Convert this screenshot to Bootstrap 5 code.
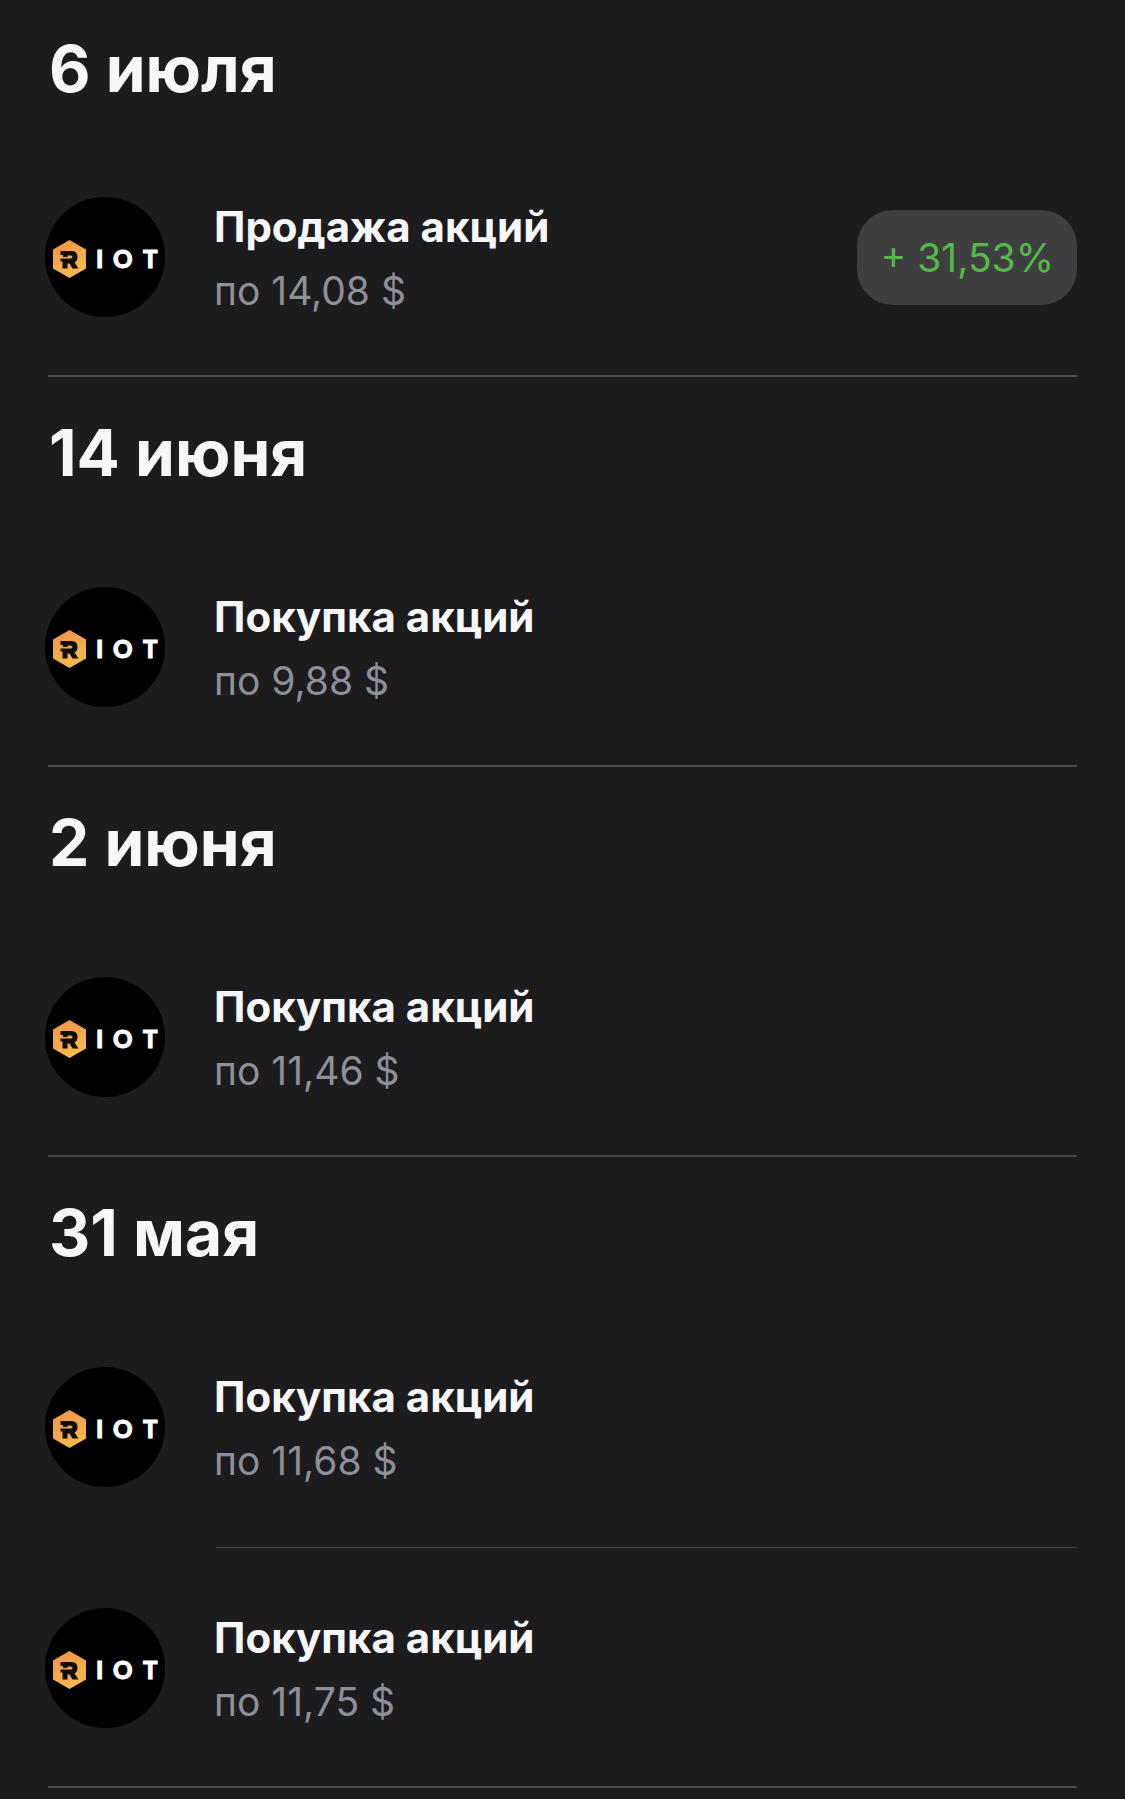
<!DOCTYPE html>
<html lang="ru" data-bs-theme="dark">
<head>
<meta charset="utf-8">
<meta name="viewport" content="width=device-width, initial-scale=1">
<title>История сделок</title>
<link href="https://cdn.jsdelivr.net/npm/bootstrap@5.3.0/dist/css/bootstrap.min.css" rel="stylesheet">
<style>
body { background: #1c1c1e; color: #f7f7f9; font-family: Inter, "Noto Sans", sans-serif; }
.history { padding: 0 48px 0 45px; }
.day-title { color: #f7f7f9; font-size: 64px; line-height: 78px; font-weight: 700; padding: 37px 0 35px 4px; }
.day:first-child .day-title { padding: 30px 0 29px 4px; }
.deal { padding: 54px 0 52px; gap: 49px; }
.deal-logo { width: 120px; height: 120px; }
.deal-name { font-size: 42px; line-height: 64px; font-weight: 700; }
.deal-price { font-size: 39px; line-height: 64px; color: #8f9097; }
.deal-profit { background: #3f3f41; color: #55b949; font-size: 39px; line-height: 47px; padding: 24px 23px; border-radius: 36px; }
.day-line { height: 2px; margin-left: 3px; background: #4a4a4c; }
.deal-line { height: 1px; margin: 2px 0 0 171px; background: #434345; }
.logo-word { font-family: Lato, sans-serif; font-weight: 900; font-size: 24px; fill: #fff; stroke: #fff; stroke-width: 1px; }
</style>
<script src="https://cdn.jsdelivr.net/npm/bootstrap@5.3.0/dist/js/bootstrap.bundle.min.js" defer></script>
</head>
<body>
<svg width="0" height="0" class="position-absolute" aria-hidden="true">
  <defs>
    <linearGradient id="amber" x1="0" y1="0" x2=".4" y2="1"><stop offset="0" stop-color="#f0914a"/><stop offset="1" stop-color="#f5b94f"/></linearGradient>
    <symbol id="riot" viewBox="0 0 120 120">
      <circle cx="60" cy="60" r="60" fill="#000"/>
      <path d="M24.500 43L41 52.500V71.500L24.500 81L8 71.500V52.500Z" fill="url(#amber)"/>
      <path d="M15.500 54H26.500Q32.500 54 32.500 60Q32.500 64 29.500 65.500L33.500 71.500H27.500L24.500 66.500H22.500V71.500H17.500V64.500H15.500V61.500H25.500Q27.500 61.500 27.500 60Q27.500 58.500 25.500 58.500H22.500V60H18V58H15.500Z" fill="#100c08"/>
    </symbol>
  </defs>
</svg>
<main class="history">
  <section class="day">
    <h2 class="day-title m-0">6 июля</h2>
    <article class="deal d-flex align-items-center">
      <svg class="deal-logo flex-shrink-0" viewBox="0 0 120 120"><use href="#riot"/><text class="logo-word" x="51 68 98" y="71">IOT</text></svg>
      <div class="flex-grow-1 pt-1"><div class="deal-name">Продажа акций</div><div class="deal-price">по 14,08 $</div></div>
      <span class="deal-profit text-nowrap">+ 31,53%</span>
    </article>
    <div class="day-line"></div>
  </section>
  <section class="day">
    <h2 class="day-title m-0">14 июня</h2>
    <article class="deal d-flex align-items-center">
      <svg class="deal-logo flex-shrink-0" viewBox="0 0 120 120"><use href="#riot"/><text class="logo-word" x="51 68 98" y="71">IOT</text></svg>
      <div class="flex-grow-1 pt-1"><div class="deal-name">Покупка акций</div><div class="deal-price">по 9,88 $</div></div>
    </article>
    <div class="day-line"></div>
  </section>
  <section class="day">
    <h2 class="day-title m-0">2 июня</h2>
    <article class="deal d-flex align-items-center">
      <svg class="deal-logo flex-shrink-0" viewBox="0 0 120 120"><use href="#riot"/><text class="logo-word" x="51 68 98" y="71">IOT</text></svg>
      <div class="flex-grow-1 pt-1"><div class="deal-name">Покупка акций</div><div class="deal-price">по 11,46 $</div></div>
    </article>
    <div class="day-line"></div>
  </section>
  <section class="day">
    <h2 class="day-title m-0">31 мая</h2>
    <article class="deal d-flex align-items-center">
      <svg class="deal-logo flex-shrink-0" viewBox="0 0 120 120"><use href="#riot"/><text class="logo-word" x="51 68 98" y="71">IOT</text></svg>
      <div class="flex-grow-1 pt-1"><div class="deal-name">Покупка акций</div><div class="deal-price">по 11,68 $</div></div>
    </article>
    <div class="deal-line"></div>
    <article class="deal d-flex align-items-center">
      <svg class="deal-logo flex-shrink-0" viewBox="0 0 120 120"><use href="#riot"/><text class="logo-word" x="51 68 98" y="71">IOT</text></svg>
      <div class="flex-grow-1 pt-1"><div class="deal-name">Покупка акций</div><div class="deal-price">по 11,75 $</div></div>
    </article>
    <div class="day-line"></div>
  </section>
</main>
</body>
</html>
